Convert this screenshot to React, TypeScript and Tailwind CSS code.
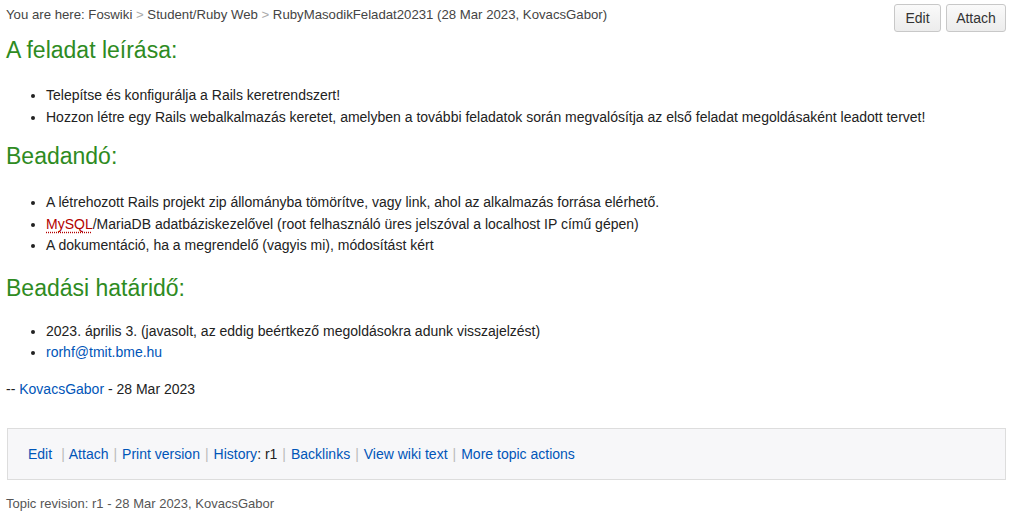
import React from "react";

const link = "text-[#0055b8]";

function Sep({ wide }: { wide?: boolean }) {
  return <span className={wide ? "text-[#bbbbbb] pl-[9px] pr-[4px]" : "text-[#bbbbbb] px-[5px]"}>|</span>;
}

export default function App() {
  return (
    <div className="min-h-[516px] bg-white font-['Liberation_Sans',Arial,sans-serif] text-[14px] text-[#222] px-[6px]">
      <div className="flex items-start justify-between pt-[4px]">
        <div className="text-[13.2px] text-[#444] pt-[3px] leading-[16px]">
          You are here: Foswiki <span className="text-[#aaa]">&gt;</span> Student/Ruby Web{" "}
          <span className="text-[#aaa]">&gt;</span> RubyMasodikFeladat20231 (28 Mar 2023, KovacsGabor)
        </div>
        <div className="flex gap-[5px] pr-[6px]">
          <button className="h-[28px] w-[47px] rounded-[3px] border border-[#c8c8c8] bg-gradient-to-b from-[#fafafa] to-[#ececec] text-[14px] text-[#333]">
            Edit
          </button>
          <button className="h-[28px] w-[60px] rounded-[3px] border border-[#c8c8c8] bg-gradient-to-b from-[#fafafa] to-[#ececec] text-[14px] text-[#333]">
            Attach
          </button>
        </div>
      </div>

      <h2 className="mt-[3px] text-[23px] leading-[30px] text-[#2e8b22]">A feladat leírása:</h2>
      <ul className="mt-[20px] list-disc pl-[40px] leading-[21.5px]">
        <li>Telepítse és konfigurálja a Rails keretrendszert!</li>
        <li>Hozzon létre egy Rails webalkalmazás keretet, amelyben a további feladatok során megvalósítja az első feladat megoldásaként leadott tervet!</li>
      </ul>

      <h2 className="mt-[13px] text-[23px] leading-[30px] text-[#2e8b22]">Beadandó:</h2>
      <ul className="mt-[21px] list-disc pl-[40px] leading-[21.5px]">
        <li>A létrehozott Rails projekt zip állományba tömörítve, vagy link, ahol az alkalmazás forrása elérhető.</li>
        <li>
          <span className="text-[#b30000] underline decoration-dotted decoration-[#b30000] underline-offset-[3px]">MySQL</span>
          /MariaDB adatbáziskezelővel (root felhasználó üres jelszóval a localhost IP című gépen)
        </li>
        <li>A dokumentáció, ha a megrendelő (vagyis mi), módosítást kért</li>
      </ul>

      <h2 className="mt-[16px] text-[23px] leading-[30px] text-[#2e8b22]">Beadási határidő:</h2>
      <ul className="mt-[18px] list-disc pl-[40px] leading-[21.5px]">
        <li>2023. április 3. (javasolt, az eddig beértkező megoldásokra adunk visszajelzést)</li>
        <li>
          <span className={link}>rorhf@tmit.bme.hu</span>
        </li>
      </ul>

      <p className="mt-[15px] leading-[21.5px]">
        -- <span className={link}>KovacsGabor</span> - 28 Mar 2023
      </p>

      <div className="mt-[28px] mr-[6px] ml-px h-[52px] flex items-center border border-[#dddddd] bg-[#f7f7f9] pl-[20px]">
        <p>
          <span className={link}>Edit</span>
          <Sep wide />
          <span className={link}>Attach</span>
          <Sep />
          <span className={link}>Print version</span>
          <Sep />
          <span className={link}>History</span>
          <span>: r1</span>
          <Sep />
          <span className={link}>Backlinks</span>
          <Sep />
          <span className={link}>View wiki text</span>
          <Sep />
          <span className={link}>More topic actions</span>
        </p>
      </div>

      <p className="mt-[16px] text-[13px] text-[#555] leading-[16px]">Topic revision: r1 - 28 Mar 2023, KovacsGabor</p>
    </div>
  );
}
